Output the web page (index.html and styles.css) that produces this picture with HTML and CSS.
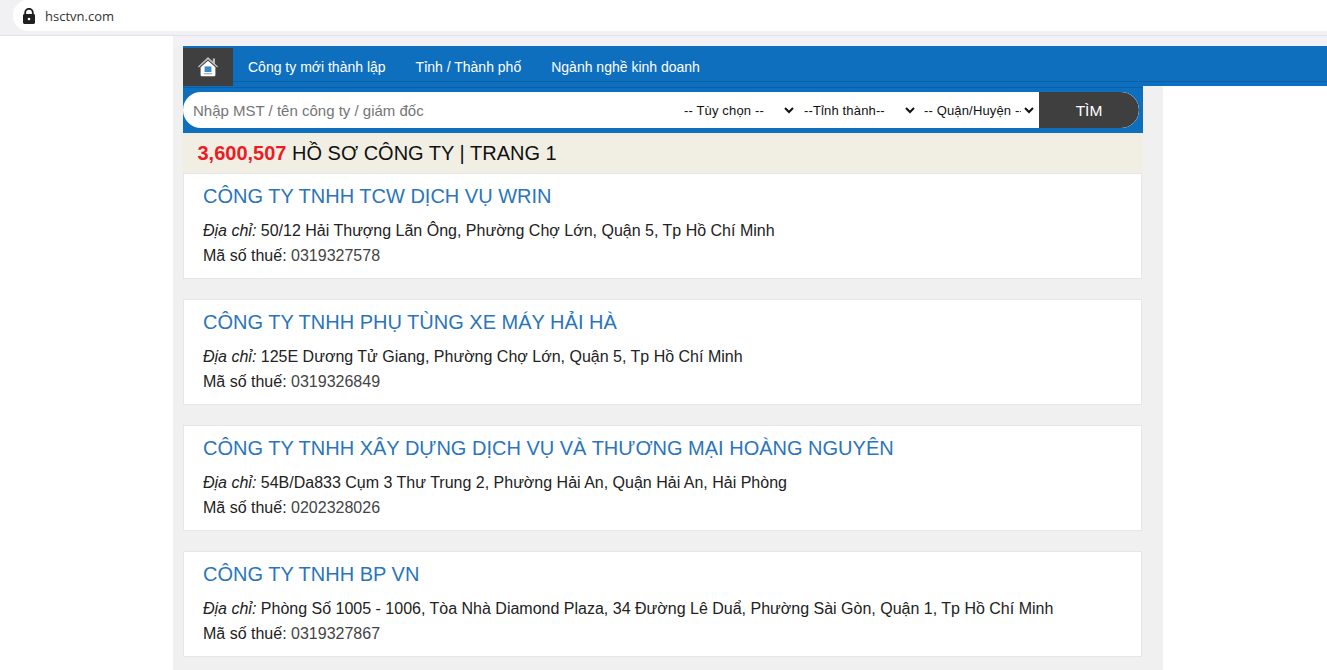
FILE: index.html
```html
<!DOCTYPE html>
<html lang="vi">
<head>
<meta charset="utf-8">
<title>hsctvn.com</title>
<link rel="stylesheet" href="styles.css">
</head>
<body>
<header class="addressbar">
  <div class="pill">
    <svg class="lock" width="14" height="16" viewBox="0 0 14 16"><path d="M3.2 6.5V4.6a3.8 3.8 0 0 1 7.6 0v1.9" fill="none" stroke="#1f1f1f" stroke-width="1.8"/><rect x="1" y="6" width="12" height="10" rx="1.4" fill="#1f1f1f"/><circle cx="7" cy="11" r="1.3" fill="#fff"/></svg>
    <span class="url">hsctvn.com</span>
  </div>
</header>
<div class="page">
  <div class="topgap"></div>
  <main class="column">
    <nav class="nav">
      <a class="home">
        <svg width="20" height="20" viewBox="0 0 20 20"><path d="M10 0 0 9.6l.8 1L10 2.6l9.2 8 .8-1-3-2.9V1.6h-2.2v3z" fill="#b9bec2"/><path d="M2.6 10.2 10 3.8l7.4 6.4V18a1.2 1.2 0 0 1-1.2 1.2H3.8A1.2 1.2 0 0 1 2.6 18z" fill="#fff"/><rect x="6.6" y="9.4" width="6.8" height="5.6" fill="#4a86b5"/><rect x="7.6" y="10.4" width="4.8" height="3.6" fill="#2a8fdb"/><rect x="6" y="16" width="8" height="1.4" fill="#aab4bb"/></svg>
      </a>
      <a class="navlink">Công ty mới thành lập</a>
      <a class="navlink">Tỉnh / Thành phố</a>
      <a class="navlink">Ngành nghề kinh doanh</a>
    </nav>
    <form class="search">
      <div class="searchbox">
        <input class="query" type="text" placeholder="Nhập MST / tên công ty / giám đốc">
        <select class="sel sel1"><option>-- Tùy chọn --</option></select>
        <select class="sel sel2"><option>--Tỉnh thành--</option></select>
        <select class="sel sel3"><option>-- Quận/Huyện --</option></select>
        <button class="go" type="button">TÌM</button>
      </div>
    </form>
    <h1 class="heading"><b>3,600,507</b> HỒ SƠ CÔNG TY | TRANG 1</h1>
    <section class="list">
      <article class="card">
        <h2>CÔNG TY TNHH TCW DỊCH VỤ WRIN</h2>
        <p><i>Địa chỉ:</i> 50/12 Hải Thượng Lãn Ông, Phường Chợ Lớn, Quận 5, Tp Hồ Chí Minh</p>
        <p class="tax">Mã số thuế: <span>0319327578</span></p>
      </article>
      <article class="card">
        <h2>CÔNG TY TNHH PHỤ TÙNG XE MÁY HẢI HÀ</h2>
        <p><i>Địa chỉ:</i> 125E Dương Tử Giang, Phường Chợ Lớn, Quận 5, Tp Hồ Chí Minh</p>
        <p class="tax">Mã số thuế: <span>0319326849</span></p>
      </article>
      <article class="card">
        <h2>CÔNG TY TNHH XÂY DỰNG DỊCH VỤ VÀ THƯƠNG MẠI HOÀNG NGUYÊN</h2>
        <p><i>Địa chỉ:</i> 54B/Da833 Cụm 3 Thư Trung 2, Phường Hải An, Quận Hải An, Hải Phòng</p>
        <p class="tax">Mã số thuế: <span>0202328026</span></p>
      </article>
      <article class="card">
        <h2>CÔNG TY TNHH BP VN</h2>
        <p><i>Địa chỉ:</i> Phòng Số 1005 - 1006, Tòa Nhà Diamond Plaza, 34 Đường Lê Duẩ, Phường Sài Gòn, Quận 1, Tp Hồ Chí Minh</p>
        <p class="tax">Mã số thuế: <span>0319327867</span></p>
      </article>
    </section>
  </main>
</div>
</body>
</html>
```
FILE: styles.css
```css
* { box-sizing: border-box; }
html, body { margin: 0; height: 100%; overflow: hidden; background: #fff; }
body { font-family: "Liberation Sans", Arial, sans-serif; color: #111; }

.addressbar { height: 36px; background: #f1f1f4; padding: 0 0 4px 13px; border-bottom: 1px solid #e2e2ea; }
.pill { height: 31px; background: #fff; border-radius: 15px 0 0 15px; display: flex; align-items: center; padding-left: 9px; gap: 9px; }
.lock { flex: none; }
.url { font-family: "Open Sans", sans-serif; font-size: 13px; color: #333; }

.page { padding-left: 173px; }
.topgap { height: 10px; background: #f2f2f6; }
.column { width: 990px; min-height: 624px; background: #f0f0f0; padding: 0 0 0 10px; }

.nav { width: 1144px; height: 40px; background: linear-gradient(#0f6fbf 35px, #0c5ea6 35px, #0c5ea6 36px, #0f6fbf 36px); display: flex; align-items: flex-end; }
.home { width: 50px; height: 38px; background: #3f3f3f; display: flex; align-items: center; justify-content: center; }
.navlink { color: #fff; font-size: 14px; align-self: flex-start; line-height: 43px; margin: 0 15px; white-space: nowrap; }

.search { width: 960px; height: 47px; background: linear-gradient(#0f6fbf 1px, #0c5ea6 1px, #0c5ea6 2px, #0f6fbf 2px); padding: 6px 4px 5px 0; }
.searchbox { height: 36px; background: #fff; border-radius: 18px; display: flex; align-items: center; overflow: hidden; }
.query { flex: 1; min-width: 0; height: 100%; border: 0; outline: 0; padding: 0 0 0 10px; font: 15px "Liberation Sans", Arial, sans-serif; background: transparent; }
.query::placeholder { color: #757575; opacity: 1; }
.sel { flex: none; height: 100%; border: 0; outline: 0; background: #fff; font: 13px "Liberation Sans", Arial, sans-serif; letter-spacing: 0.15px; color: #111; padding: 0; }
.sel1 { width: 117px; margin-right: 3px; }
.sel2 { width: 118px; margin-right: 2px; }
.sel3 { width: 117px; margin-right: 2px; }
.go { flex: none; width: 100px; height: 100%; border: 0; background: #3f3f3f; color: #fff; font: 15.5px "Liberation Sans", Arial, sans-serif; border-radius: 0 18px 18px 0; padding: 1px 0 0; }

.heading { width: 960px; height: 40px; margin: 0; background: #f1efe3; font-size: 20px; font-weight: 400; line-height: 41px; padding-left: 14.5px; color: #111; }
.heading b { color: #ed1c24; }

.list { display: flex; flex-direction: column; gap: 20px; }
.card { width: 959px; height: 106px; background: #fff; border: 1px solid #e6e6e6; padding: 9px 19px 0; }
.card h2 { margin: 0 0 9px; font-size: 20px; font-weight: 400; line-height: 26px; color: #2a75bb; white-space: nowrap; }
.card p { margin: 0; font-size: 16px; line-height: 25px; color: #222; white-space: nowrap; }
.tax span { color: #444; }
```
